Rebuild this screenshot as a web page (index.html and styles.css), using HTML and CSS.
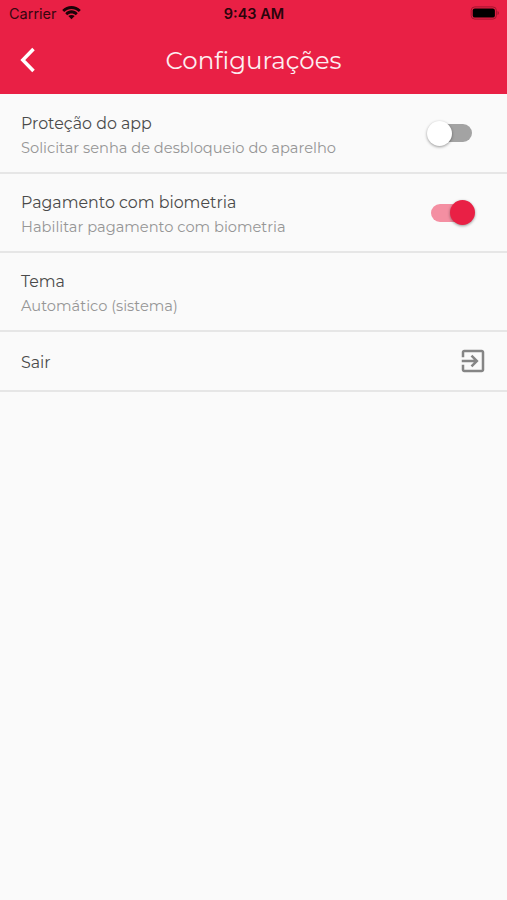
FILE: index.html
```html
<!DOCTYPE html>
<html lang="pt-BR">
<head>
    <meta charset="UTF-8">
    <meta name="viewport" content="width=device-width, initial-scale=1.0">
    <title>Configurações</title>
    <link rel="stylesheet" href="styles.css">
</head>
<body>
    <header class="header">
        <!-- Status Bar -->
        <div class="status-bar">
            <div class="carrier">
                <span>Carrier</span>
                <svg class="wifi" viewBox="0 0 18 14">
                    <path d="M0.2 4.7C5.1-0.6 12.9-0.6 17.8 4.7L15.9 6.6C12 2.6 6 2.6 2.1 6.6z"/>
                    <path d="M3.1 7.6C6.5 4.1 11.5 4.1 14.9 7.6L13.1 9.5C10.7 7.3 7.3 7.3 4.9 9.5z"/>
                    <path d="M6 10.4C7.7 8.9 10.3 8.9 12 10.4L9 13.5z"/>
                </svg>
            </div>
            <div class="clock">9:43 AM</div>
            <svg class="battery" viewBox="0 0 30 14">
                <rect class="battery-outline" x="1.2" y="0.9" width="25.2" height="12.2" rx="3.6"/>
                <rect x="2.7" y="2.4" width="22.2" height="9.2" rx="2.2"/>
                <path class="battery-tip" d="M27.6 5c1.5.6 1.5 3.4 0 4z"/>
            </svg>
        </div>

        <!-- Title Bar -->
        <div class="title-bar">
            <button class="back" aria-label="Voltar">
                <svg viewBox="0 0 16 26">
                    <path d="M13.5 2L2.8 13L13.5 24"/>
                </svg>
            </button>
            <h1 class="title">Configurações</h1>
        </div>
    </header>

    <!-- Settings List -->
    <main class="settings">
        <div class="row first">
            <div class="texts">
                <div class="label">Proteção do app</div>
                <div class="hint">Solicitar senha de desbloqueio do aparelho</div>
            </div>
            <div class="switch"><span class="thumb"></span></div>
        </div>
        <div class="row">
            <div class="texts">
                <div class="label">Pagamento com biometria</div>
                <div class="hint">Habilitar pagamento com biometria</div>
            </div>
            <div class="switch on"><span class="thumb"></span></div>
        </div>
        <div class="row">
            <div class="texts">
                <div class="label">Tema</div>
                <div class="hint">Automático (sistema)</div>
            </div>
        </div>
        <div class="row logout">
            <div class="label">Sair</div>
            <svg class="exit-icon" viewBox="0 0 24 24">
                <path d="M10.09 15.59L11.5 17l5-5-5-5-1.41 1.41L12.67 11H3v2h9.67l-2.58 2.59zM19 3H5c-1.11 0-2 .9-2 2v4h2V5h14v14H5v-4H3v4c0 1.1.89 2 2 2h14c1.1 0 2-.9 2-2V5c0-1.1-.9-2-2-2z"/>
            </svg>
        </div>
    </main>
</body>
</html>
```
FILE: styles.css
```css
/* Body Styling */
* {
    box-sizing: border-box;
}

body {
    margin: 0;
    min-height: 100vh;
    font-family: Montserrat, Inter, sans-serif;
    background: #fafafa;
}

/* Header */
.header {
    height: 94px;
    background: #e92045;
}

.status-bar {
    height: 27px;
    padding: 0 7px 0 9px;
    display: grid;
    grid-template-columns: 1fr auto 1fr;
    align-items: center;
    font-family: Inter, sans-serif;
    font-size: 14.5px;
    line-height: 27px;
    color: #36060f;
}

.carrier {
    display: flex;
    align-items: center;
    gap: 5px;
}

.wifi {
    width: 19px;
    height: 15px;
    margin-top: -2px;
    fill: #1c0308;
}

.clock {
    margin-right: 1px;
    font-weight: 600;
    color: #2a040b;
}

.battery {
    width: 30px;
    height: 14px;
    margin-top: -1px;
    justify-self: end;
}

.battery-outline {
    fill: none;
    stroke: #a3152f;
    stroke-width: 1;
}

.battery-tip {
    fill: #8d1229;
}

/* Title Bar */
.title-bar {
    height: 66px;
    display: grid;
    grid-template-columns: 56px 1fr 56px;
    align-items: center;
}

.back {
    padding: 0 0 0 20px;
    border: none;
    background: none;
    display: flex;
    cursor: pointer;
}

.back svg {
    width: 16px;
    height: 26px;
    fill: none;
    stroke: #ffffff;
    stroke-width: 3.5;
}

.title {
    margin: 0;
    font-size: 24.5px;
    font-weight: 400;
    line-height: 32px;
    text-align: center;
    color: #fdeef1;
}

/* Settings Rows */
.row {
    height: 79px;
    padding: 0 21px;
    display: flex;
    justify-content: space-between;
    align-items: center;
    border-bottom: 2px solid #e6e6e6;
}

.row.first {
    height: 80px;
}

.row.logout {
    height: 60px;
}

.texts {
    padding-top: 6px;
}

.label {
    font-size: 15.85px;
    line-height: 24px;
    color: #4a4a4a;
    white-space: nowrap;
}

.logout .label {
    padding-top: 3px;
}

.hint {
    font-size: 14.65px;
    line-height: 25px;
    color: #969696;
    white-space: nowrap;
}

/* Switches */
.switch {
    width: 41px;
    height: 18px;
    margin-right: 14px;
    border-radius: 9px;
    background: #a3a3a3;
    display: flex;
    align-items: center;
}

.thumb {
    flex: none;
    width: 25px;
    height: 25px;
    margin-left: -4px;
    border-radius: 50%;
    background: #ffffff;
    box-shadow: 0 1px 3px rgba(0, 0, 0, 0.4);
}

.switch.on {
    background: #f48fa2;
}

.switch.on .thumb {
    margin-left: 19px;
    background: #e92045;
}

/* Exit Icon */
.exit-icon {
    width: 30px;
    height: 30px;
    margin-right: -2px;
    fill: #858585;
}
```
